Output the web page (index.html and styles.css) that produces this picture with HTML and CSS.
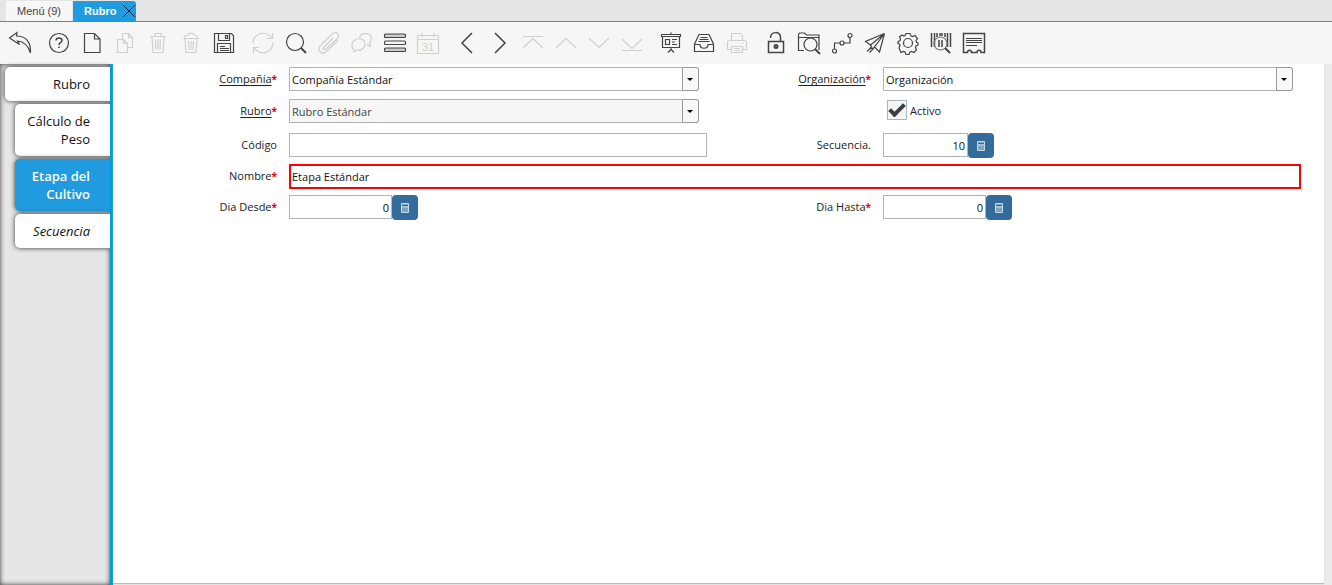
FILE: index.html
```html
<!DOCTYPE html>
<html lang="es">
<head>
    <meta charset="UTF-8">
    <title>Rubro</title>
    <link rel="stylesheet" href="styles.css">
</head>
<body>
<div class="tabs">
    <button class="tab">Menú (9)</button>
    <button class="tab active">Rubro
        <svg class="close" viewBox="0 0 14 14"><path d="M1 1l12 12M13 1L1 13"/></svg>
    </button>
</div>
<div class="toolbar">
    <div class="group">
        <button title="Deshacer"><svg viewBox="0 0 24 24"><path d="M1.5 7L9 1.500L8.500 5C18 5 23 11 22.500 22C20 14 16 10.500 9.500 10L11.500 13.500z"/></svg></button>
    </div>
    <div class="group">
        <button title="Ayuda"><svg viewBox="0 0 24 24"><circle cx="12" cy="12" r="9.500"/><path d="M9 9.500C9 6 15 6 15 9.500C15 11.500 12 11.500 12 14M12 15.500v1.500" stroke-width="1.5"/></svg></button>
        <button title="Nuevo"><svg viewBox="0 0 24 24"><path d="M4.500 2.500h10l5.500 5.500v13.500H4.500zM14.500 2.500V8H20"/></svg></button>
        <button title="Copiar" disabled><svg viewBox="0 0 24 24"><path d="M4.500 8.500h6l4 4v9h-10zM10.500 8.500v4h4M9.500 8V2.500h6l4 4v10h-5M15.500 2.500v4h4"/></svg></button>
        <button title="Eliminar" disabled><svg viewBox="0 0 24 24"><path d="M4 5.500h16M9 5V2.500h6V5M6 5.500l1 16h10l1-16M9.500 8.500l.5 10M12 8.500v10M14.500 8.500l-.5 10"/></svg></button>
        <button title="Eliminar selección" disabled><svg viewBox="0 0 24 24"><path d="M5 7.500C5 4 8 5 9 3.500C10 2 14 2 15 3.500C16 5 19 4 19 7.500zM6 8l1 13.500h10L18 8M9.500 10l.5 9M12 10v9M14.500 10l-.5 9"/></svg></button>
        <button title="Guardar"><svg viewBox="0 0 24 24"><path d="M2.500 2.500h17l2 2v17h-19zM6.500 2.500v7h11v-7M5.500 21.500v-9h13v9M13.500 4.500h2v3h-2zM8 15.500h5M8 17.500h9M8 19.500h9"/></svg></button>
    </div>
    <div class="group">
        <button title="Refrescar" disabled><svg viewBox="0 0 24 24"><path d="M2 12A10 10 0 0 1 20.500 7M22 11.500A10 10 0 0 1 3.500 17M21.500 2v5.500H16M2.500 22v-5.500H8"/></svg></button>
        <button title="Buscar"><svg viewBox="0 0 24 24"><circle cx="11" cy="11" r="8.500"/><path d="M17 17l5 5" stroke-width="2"/></svg></button>
        <button title="Adjuntar" disabled><svg viewBox="0 0 24 24"><path d="M16 7l-9 9c-2 2 0 4 2 2L20 8c4-4-1-9-5-5L4 14c-5 5 1 11 6 6L21 9.500"/></svg></button>
        <button title="Chat" disabled><svg viewBox="0 0 24 24"><path d="M4.500 19.500C1 17 1 11 5 9c5-3 11 0 10 5c-1 4-5 6-8 5l-4 2zM9.500 7.500C10 1 21 1 21.500 7.500c0 2-1 4-2 5l1 3-4-2"/></svg></button>
        <button title="Cuadrícula"><svg viewBox="0 0 24 24"><rect x="1.500" y="3" width="21" height="3.500" rx="1" fill="#ccc"/><rect x="1.500" y="10" width="21" height="3.500" rx="1"/><rect x="1.500" y="17" width="21" height="3.500" rx="1" fill="#ccc"/></svg></button>
        <button title="Calendario" disabled><svg viewBox="0 0 24 24"><path d="M1.500 4.500h21v18h-21zM1.500 8.500h21M6 2v4M18 2v4"/><text class="day" x="12" y="20">31</text></svg></button>
    </div>
    <div class="group">
        <button title="Anterior"><svg viewBox="0 0 24 24"><path d="M17 2L7 12l10 10" stroke-width="1.5"/></svg></button>
        <button title="Siguiente"><svg viewBox="0 0 24 24"><path d="M7 2l10 10L7 22" stroke-width="1.5"/></svg></button>
        <button title="Primero" disabled><svg viewBox="0 0 24 24"><path d="M2 5.500h20M2 17l10-9.500L22 17"/></svg></button>
        <button title="Arriba" disabled><svg viewBox="0 0 24 24"><path d="M2 17l10-9.500L22 17"/></svg></button>
        <button title="Abajo" disabled><svg viewBox="0 0 24 24"><path d="M2 7l10 9.500L22 7"/></svg></button>
        <button title="Último" disabled><svg viewBox="0 0 24 24"><path d="M2 8l10 9.500L22 8M2 19.500h20"/></svg></button>
    </div>
    <div class="group">
        <button title="Informe"><svg viewBox="0 0 24 24"><path d="M2.500 3.500h19v2h-19zM3.500 5.500v11h17v-11M12 3V1.500M12 16.500v2M12 18.500l-3 3M12 18.500l3 3M6.500 8.500h4v5h-4zM13 8.500h5M13 11h3M13 13.500h5"/></svg></button>
        <button title="Archivo"><svg viewBox="0 0 24 24"><path d="M2.500 13L7 3.500h10L21.500 13v7.500h-19zM2.500 13.500H8c0 5 8 5 8 0h5.500M8.500 6.500h7M7.500 8.500h9M6.500 10.500h11"/></svg></button>
        <button title="Imprimir" disabled><svg viewBox="0 0 24 24"><path d="M6.500 9V2.500h9l2 2V9M6 18.500H2.500v-7c0-1 1-2 2-2h15c1 0 2 1 2 2v7H18M6.500 15.500h11v6h-11zM9 17.500h6M9 19.500h6M17 12h2"/></svg></button>
    </div>
    <div class="group">
        <button title="Bloquear"><svg viewBox="0 0 24 24"><path d="M4.500 10.500h15v11h-15zM6.500 7c0-7 10-7 10-1v4.500" stroke-width="1.5"/><circle cx="12" cy="15.500" r="1.500" stroke-width="2"/></svg></button>
        <button title="Visualizar"><svg viewBox="0 0 24 24"><path d="M7 19.500H1.500v-16l1-1.500h5l2 2h12.500V19M1.500 6.500H22"/><circle cx="13.500" cy="13.500" r="6.500"/><path d="M18 18l5 5" stroke-width="2"/></svg></button>
        <button title="Flujo de trabajo"><svg viewBox="0 0 24 24"><circle cx="4.500" cy="20" r="2"/><circle cx="12" cy="12" r="2"/><circle cx="20" cy="4.500" r="2"/><path d="M4.500 18v-6H10M14 12h6V6.500"/></svg></button>
        <button title="Enviar"><svg viewBox="0 0 24 24"><path d="M21.500 2.500L2.500 10.500l5 3.500zM21.500 2.500L16.500 21l-5-5zM7.500 14l1 3M21.500 2.500L11.500 16M8.500 16L4 20.500M10.500 17.500l-4 4M8 14v3.500l4-1"/></svg></button>
        <button title="Proceso"><svg viewBox="0 0 24 24"><path d="M10 2.500h4l1 2.500 1.500.5 2.500-1 2.500 3-1.500 2 .5 1.500 1.500 1v2l-2 1-.5 2 1 2-2.500 2.500-2.500-1-1.500.5-1 2.500h-3l-1-2.500-1.500-.5-2.500 1L3 17l1-2.500-.5-1.500-1.500-.5v-2l2-1L4.500 8l-1-2L6 4l2 1 1-.5z"/><circle cx="12" cy="12" r="4.500"/></svg></button>
        <button title="Código de barras"><svg viewBox="0 0 24 24"><path d="M2.500 2v14M5.500 2v14M8 2v4M11 2v3M13 2v3M16 2v4M18.500 2v14M21.500 2v14M10 9v7M13 9v7" stroke-width="1.5"/><circle cx="11.500" cy="12.500" r="6.500" stroke="#777"/><path d="M16 17l5 5" stroke-width="2"/></svg></button>
        <button title="Recibo"><svg viewBox="0 0 24 24"><path d="M1.500 2.500h21v19H19c0-3-4-3-4 0H9.500c0-3-4-3-4 0h-4z" stroke-width="1.5"/><path d="M4 7.500h16M4 9.500h16M4 11.500h16M4 14.500h11"/></svg></button>
    </div>
</div>
<div class="content">
    <ul class="side">
        <li class="parent"><a href="#">Rubro</a></li>
        <li><a href="#">Cálculo de Peso</a></li>
        <li class="active"><a href="#">Etapa del Cultivo</a></li>
        <li class="child"><a href="#">Secuencia</a></li>
    </ul>
    <form class="form">
        <label for="compania"><u>Compañía</u><i>*</i></label>
        <div class="combo"><select id="compania"><option>Compañía Estándar</option></select></div>
        <label for="organizacion"><u>Organización</u><i>*</i></label>
        <div class="combo"><select id="organizacion"><option>Organización</option></select></div>

        <label for="rubro"><u>Rubro</u><i>*</i></label>
        <div class="combo readonly"><select id="rubro"><option>Rubro Estándar</option></select></div>
        <div class="check">
            <input type="checkbox" id="activo" checked>
            <label for="activo">Activo</label>
        </div>

        <label for="codigo">Código</label>
        <input type="text" id="codigo">
        <label for="secuencia">Secuencia.</label>
        <div class="number short">
            <input type="text" id="secuencia" value="10">
            <button type="button" title="Calculadora"><svg viewBox="0 0 10 12"><use href="#calc"/></svg></button>
        </div>

        <label for="nombre">Nombre<i>*</i></label>
        <input type="text" id="nombre" class="wide" value="Etapa Estándar">

        <label for="desde">Dia Desde<i>*</i></label>
        <div class="number">
            <input type="text" id="desde" value="0">
            <button type="button" title="Calculadora"><svg viewBox="0 0 10 12"><g id="calc"><path d="M1.500 1.500h7v9h-7z" fill="#7fa3c2"/><path d="M2 3.500h6" stroke="#336b9b"/><path d="M2 5h6"/></g></svg></button>
        </div>
        <label for="hasta">Dia Hasta<i>*</i></label>
        <div class="number">
            <input type="text" id="hasta" value="0">
            <button type="button" title="Calculadora"><svg viewBox="0 0 10 12"><use href="#calc"/></svg></button>
        </div>
    </form>
</div>
</body>
</html>
```

FILE: styles.css
```css
*, *:before, *:after{
    margin: 0;
    padding: 0;
    box-sizing: border-box;
}
body{
    display: flex;
    flex-direction: column;
    height: 100vh;
    background-color: #ebebeb;
    font-family: "Open Sans", sans-serif;
    font-size: 11px;
    color: #222;
}
ul{
    list-style-type: none;
}
button{
    border: 0;
    background: none;
}
svg{
    display: block;
    fill: none;
    stroke: currentColor;
}
.tabs{
    display: flex;
    gap: 1px;
    padding: 1px 6px 0;
    background-color: #e6e6e6;
    border-bottom: 1px solid #219bdf;
}
.tab{
    height: 20px;
    padding: 0 11px;
    background-color: #f7f7f7;
    font: 11px "Liberation Sans", sans-serif;
    color: #444;
}
.tab.active{
    display: flex;
    align-items: center;
    gap: 6px;
    padding-right: 0;
    background-color: #219bdf;
    border-radius: 0 3px 0 0;
    font-weight: bold;
    color: #fff;
}
.close{
    width: 14px;
    height: 14px;
    color: #123;
}
/* toolbar */
.toolbar{
    display: flex;
    gap: 6px;
    padding: 0 3px;
    background-color: #f6f6f6;
}
.group{
    display: flex;
}
.group button{
    display: flex;
    justify-content: center;
    align-items: center;
    width: 33px;
    height: 42px;
    color: #444;
}
.group button:disabled{
    color: #d0d0d0;
}
.group svg{
    width: 24px;
    height: 24px;
    stroke-width: 1.2;
}
.day{
    font: 11px "Liberation Sans", sans-serif;
    text-anchor: middle;
    fill: currentColor;
    stroke: none;
}
/* side tabs */
.content{
    flex: 1;
    display: flex;
    padding-right: 8px;
}
.side{
    display: flex;
    flex-direction: column;
    gap: 3px;
    width: 113px;
    padding: 3px 0 0 15px;
    background-color: #e6e6e6;
    border-right: 3px solid #019ddd;
    box-shadow: inset 0 0 5px #333;
}
.side li{
    background-color: #fff;
    border-radius: 5px 0 0 5px;
    box-shadow: 0 0 5px #333;
    clip-path: inset(-6px 0 -6px -6px);
}
.side .parent{
    margin-left: -10px;
}
.side a{
    display: block;
    padding: 8px 20px 8px 8px;
    font-size: 13px;
    line-height: 18px;
    text-align: right;
    text-decoration: none;
    color: #111;
}
.side .active{
    background-color: #219bdf;
}
.side .active a{
    font-weight: 600;
    color: #fff;
}
.side .child a{
    font-style: italic;
}
/* form */
.form{
    flex: 1;
    display: grid;
    grid-template-columns: 176fr 418fr 176fr 418fr;
    grid-template-rows: 32px 34px 31px 31px 31px;
    align-items: start;
    margin-bottom: 2px;
    padding: 3px 23px 0 0;
    background-color: #fff;
    box-shadow: 0 1px 1px #bbb;
}
.form > label{
    padding-right: 12px;
    line-height: 24px;
    text-align: right;
}
.form u{
    text-decoration-skip-ink: none;
    text-underline-offset: 2px;
}
.form i{
    font-size: 10px;
    font-style: normal;
    font-weight: bold;
    color: #f00;
}
.form input[type=text], .form select{
    width: 100%;
    height: 24px;
    padding: 0 2px;
    background-color: #fff;
    border: 1px solid #b4b4b4;
    font: inherit;
    color: #111;
}
.combo{
    position: relative;
    margin-right: 8px;
}
.form .combo select{
    appearance: none;
    border-radius: 0 3px 3px 0;
}
.form .readonly select{
    background-color: #f6f6f6;
    color: #444;
}
.combo:after{
    content: "";
    position: absolute;
    top: 0;
    right: 0;
    width: 17px;
    height: 24px;
    background-color: #f8f8f8;
    border: 1px solid #999;
    border-radius: 0 3px 3px 0;
    pointer-events: none;
}
.combo:before{
    content: "";
    position: absolute;
    z-index: 1;
    top: 11px;
    right: 6px;
    border: 3px solid transparent;
    border-top-color: #000;
    border-bottom: 0;
    pointer-events: none;
}
.check{
    grid-column: 4;
    display: flex;
    align-items: center;
    gap: 3px;
    height: 22px;
    padding-left: 4px;
}
.check input{
    appearance: none;
    width: 20px;
    height: 20px;
    background-color: #f3f5f6;
    border: 1px solid #abb5bd;
}
.check input:checked:before{
    content: "";
    display: block;
    width: 16px;
    height: 9px;
    margin: 3px 1px;
    border: solid #3d3d3d;
    border-width: 0 0 4px 4px;
    transform: rotate(-45deg);
}
.form input.wide{
    grid-column: 2 / 5;
    height: 25px;
    padding: 0 1px;
    border: 2px solid #f00;
}
.number{
    display: flex;
}
.form .number input{
    width: 103px;
    text-align: right;
}
.form .short input{
    width: 85px;
}
.number button{
    display: flex;
    justify-content: center;
    align-items: center;
    width: 26px;
    height: 25px;
    background-color: #336b9b;
    border-radius: 4px;
    color: #c5d8e8;
}
.number svg{
    width: 10px;
    height: 12px;
}
```
